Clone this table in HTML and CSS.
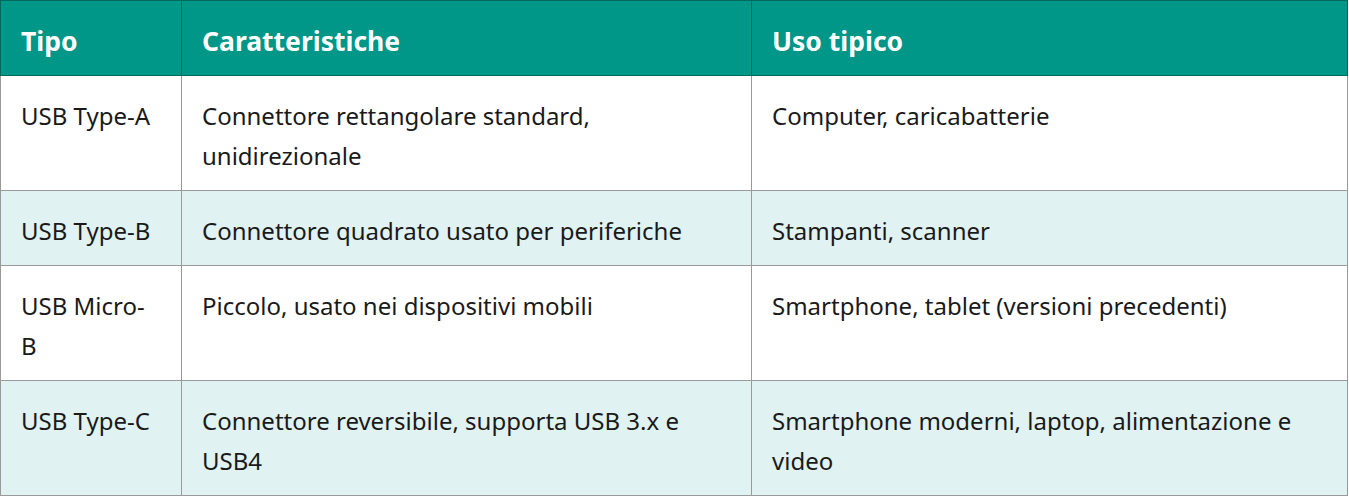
FILE: index.html
```html
<!DOCTYPE html>
<html lang="it">
<head>
<meta charset="utf-8">
<title>Tipi USB</title>
<link rel="stylesheet" href="styles.css">
</head>
<body>
<table class="usb-table">
  <colgroup>
    <col class="c1">
    <col class="c2">
    <col class="c3">
  </colgroup>
  <thead>
    <tr>
      <th>Tipo</th>
      <th>Caratteristiche</th>
      <th>Uso tipico</th>
    </tr>
  </thead>
  <tbody>
    <tr>
      <td>USB Type-A</td>
      <td>Connettore rettangolare standard, unidirezionale</td>
      <td>Computer, caricabatterie</td>
    </tr>
    <tr>
      <td>USB Type-B</td>
      <td>Connettore quadrato usato per periferiche</td>
      <td>Stampanti, scanner</td>
    </tr>
    <tr>
      <td>USB Micro-B</td>
      <td>Piccolo, usato nei dispositivi mobili</td>
      <td>Smartphone, tablet (versioni precedenti)</td>
    </tr>
    <tr>
      <td>USB Type-C</td>
      <td>Connettore reversibile, supporta USB 3.x e USB4</td>
      <td>Smartphone moderni, laptop, alimentazione e video</td>
    </tr>
  </tbody>
</table>
</body>
</html>
```

FILE: styles.css
```css
html, body {
  margin: 0;
  padding: 0;
  background: #ffffff;
}

body {
  font-family: "Noto Sans", "Open Sans", sans-serif;
  font-size: 24px;
  line-height: 40px;
  color: #1a1a1a;
}

.usb-table {
  width: 1348px;
  border-collapse: collapse;
  table-layout: fixed;
}

.c1 { width: 181px; }
.c2 { width: 570px; }

.usb-table th,
.usb-table td {
  padding: 20px 20px 14px;
  text-align: left;
  vertical-align: top;
}

.usb-table th {
  background: #009688;
  color: #ffffff;
  font-size: 26.5px;
  font-weight: 700;
  border: 1px solid #00695c;
}

.usb-table td {
  border: 1px solid #9a9a9a;
}

.usb-table td:first-child {
  padding-right: 26px;
}

.usb-table tbody tr:nth-child(even) td {
  background: #e0f2f1;
}
```
